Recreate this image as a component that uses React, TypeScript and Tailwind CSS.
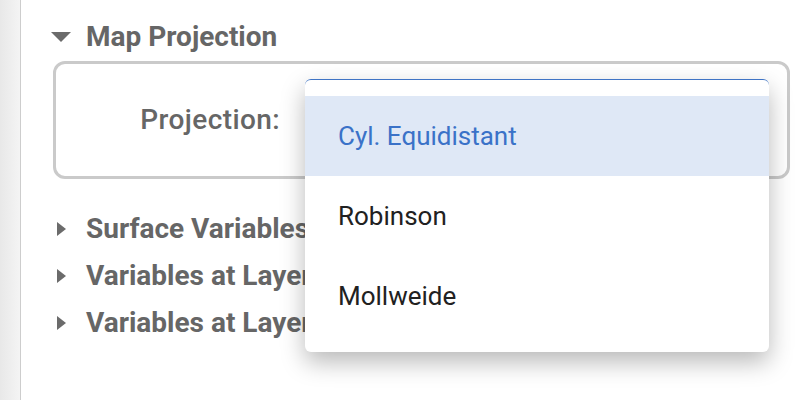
import React from "react";

const sections = ["Surface Variables", "Variables at Layer 1", "Variables at Layer 2"];
const options = ["Cyl. Equidistant", "Robinson", "Mollweide"];

function CaretDown() {
  return (
    <svg width="20" height="10" viewBox="0 0 20 10" className="shrink-0">
      <path d="M0 0 L20 0 L10 10 Z" fill="#6b6b6b" />
    </svg>
  );
}

function CaretRight() {
  return (
    <svg width="9" height="14" viewBox="0 0 9 14" className="shrink-0">
      <path d="M0 0 L9 7 L0 14 Z" fill="#6b6b6b" />
    </svg>
  );
}

export default function App() {
  return (
    <div
      className="relative flex w-[800px] h-[400px] overflow-hidden bg-white"
      style={{ fontFamily: "Roboto, 'Liberation Sans', sans-serif" }}
    >
      <div className="w-[21px] h-full shrink-0 bg-gradient-to-r from-[#e8e8e8] to-[#f4f4f4] border-r border-[#cdcdcd]" />

      <div className="flex-1 flex flex-col pl-[30px] pt-[22px]">
        <div className="flex items-center h-[30px] gap-[15px]">
          <CaretDown />
          <span className="text-[28px] leading-[30px] font-bold text-[#666666]">Map Projection</span>
        </div>

        <div className="ml-[2px] mt-[9px] w-[737px] h-[118px] border-[3px] border-[#cacaca] rounded-[12px] flex items-center">
          <div className="w-[224px] text-right text-[28px] leading-[30px] font-medium tracking-[0.4px] text-[#666666]">
            Projection:
          </div>
          <div className="ml-[25px] w-[464px] h-[46px] border border-[#3f74c5] rounded-[6px]" />
        </div>

        <div className="flex flex-col mt-[26px]">
          {sections.map((s) => (
            <div key={s} className="flex items-center h-[47px] pl-[6px] gap-[20px]">
              <CaretRight />
              <span className="text-[28px] leading-[30px] font-bold text-[#666666] whitespace-nowrap">{s}</span>
            </div>
          ))}
        </div>
      </div>

      <div className="absolute left-[305px] top-[79px] w-[464px] h-[273px] bg-white rounded-[6px] border-t border-[#3f74c5] shadow-[0_10px_24px_rgba(0,0,0,0.28)] py-[16px] flex flex-col">
        {options.map((o, i) => (
          <div
            key={o}
            className={
              i === 0
                ? "h-[80px] flex items-center px-[33px] bg-[#dfe8f6] text-[#3a72c8] text-[26px]"
                : "h-[80px] flex items-center px-[33px] text-[#212121] text-[26px]"
            }
          >
            {o}
          </div>
        ))}
      </div>
    </div>
  );
}
